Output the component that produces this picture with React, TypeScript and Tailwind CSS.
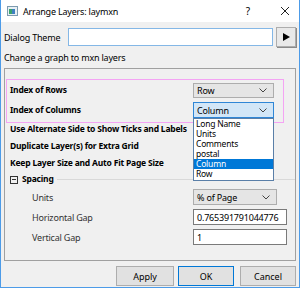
import React from 'react';

const Chevron = () => (
  <svg width="8" height="5" viewBox="0 0 8 5" className="shrink-0">
    <polyline points="0.5,0.5 4,4 7.5,0.5" fill="none" stroke="#444" strokeWidth="1" />
  </svg>
);

interface SelectProps {
  value: string;
  width: string;
  height: string;
  active?: boolean;
}

const Select: React.FC<SelectProps> = ({ value, width, height, active }) => (
  <div
    className={`${width} ${height} flex items-center justify-between pl-[3px] pr-[6px] border ${
      active ? 'border-[#2f86d6] bg-[#d2e6f7]' : 'border-[#adadad] bg-[#e5e5e5]'
    }`}
  >
    <span className="text-[9px] tracking-[-0.2px] leading-none whitespace-nowrap">{value}</span>
    <Chevron />
  </div>
);

const listItems = ['Long Name', 'Units', 'Comments', 'postal', 'Column', 'Row'];

const Label: React.FC<{ children: React.ReactNode; className?: string }> = ({ children, className }) => (
  <span className={`text-[8.5px] font-bold tracking-[-0.2px] leading-none whitespace-nowrap ${className ?? ''}`}>
    {children}
  </span>
);

export default function App() {
  return (
    <div className="w-[300px] h-[288px] bg-[#f0f0f0] border-x border-b border-[#4c9be8] flex flex-col overflow-hidden text-black font-['Noto_Sans',sans-serif]">
      {/* title bar */}
      <div className="h-[22px] bg-white flex items-center shrink-0">
        <svg width="11" height="10" viewBox="0 0 11 10" className="ml-[6px]">
          <rect x="0.5" y="0.5" width="10" height="9" fill="#e8f0f4" stroke="#7d9bb0" />
          <rect x="2" y="3" width="3" height="5" fill="#3aa36a" />
          <rect x="5" y="3" width="3" height="5" fill="#3f7fc0" />
        </svg>
        <span className="ml-[5px] text-[9px] tracking-[-0.2px] leading-none">Arrange Layers: laymxn</span>
        <span className="ml-auto text-[10px] leading-none mr-[30px]">?</span>
        <svg width="10" height="10" viewBox="0 0 10 10" className="mr-[9px]">
          <path d="M1 1 L9 9 M9 1 L1 9" stroke="#222" strokeWidth="1" />
        </svg>
      </div>

      <div className="flex flex-col pl-[3px] pr-[3px]">
        {/* dialog theme */}
        <div className="mt-[5px] h-[20px] flex items-center">
          <span className="w-[64px] text-[9px] tracking-[-0.2px] leading-none">Dialog Theme</span>
          <div className="w-[206px] h-[18px] bg-white border border-[#84b7e6]" />
          <div className="ml-[3px] w-[20px] h-[20px] bg-[#e9e9e9] border border-[#adadad] shadow-[1px_1px_0_#8a8a8a] flex items-center justify-center">
            <svg width="7" height="8" viewBox="0 0 7 8">
              <polygon points="0,0 7,4 0,8" fill="#000" />
            </svg>
          </div>
        </div>

        <div className="mt-[3px] h-[14px] flex items-center">
          <span className="text-[9px] tracking-[-0.2px] leading-none">Change a graph to mxn layers</span>
        </div>

        {/* main panel */}
        <div className="mt-[4px] w-[292px] h-[193px] border border-[#a0a0a0] flex flex-col">
          <div className="mt-[10px] ml-[1px] w-[278px] h-[44px] border border-[#f4a4f4] flex flex-col">
            <div className="h-[20px] flex items-center">
              <Label className="w-[186px] pl-[3px]">Index of Rows</Label>
              <Select value="Row" width="w-[81px]" height="h-[15px]" />
            </div>
            <div className="h-[20px] flex items-center">
              <Label className="w-[186px] pl-[3px]">Index of Columns</Label>
              <div className="relative">
                <Select value="Column" width="w-[81px]" height="h-[16px]" active />
                <div className="absolute top-full left-0 w-[81px] h-[63px] bg-white border border-[#5a7fa8] z-10">
                  <div className="flex flex-col">
                    {listItems.map((item) => (
                      <div
                        key={item}
                        className={`h-[10px] pl-[2px] text-[8.5px] tracking-[-0.2px] leading-[10px] whitespace-nowrap ${
                          item === 'Column' ? 'bg-[#0078d7] text-white' : ''
                        }`}
                      >
                        {item}
                      </div>
                    ))}
                  </div>
                </div>
              </div>
            </div>
          </div>

          <div className="-mt-[2px] flex flex-col">
            <div className="h-[17px] flex items-center pl-[5px]">
              <Label>Use Alternate Side to Show Ticks and Labels</Label>
            </div>
            <div className="h-[17px] flex items-center pl-[5px]">
              <Label>Duplicate Layer(s) for Extra Grid</Label>
            </div>
            <div className="h-[17px] flex items-center pl-[5px]">
              <Label>Keep Layer Size and Auto Fit Page Size</Label>
            </div>
            <div className="h-[15px] flex items-center pl-[5px]">
              <div className="w-[8px] h-[8px] border border-[#333] flex items-center justify-center">
                <div className="w-[4px] h-px bg-[#333]" />
              </div>
              <Label className="ml-[4px]">Spacing</Label>
              <div className="ml-[3px] flex-1 h-px bg-[#d9d9d9]" />
            </div>
            <div className="h-[20px] flex items-center">
              <span className="w-[188px] pl-[27px] text-[9px] tracking-[-0.2px] leading-none text-[#333]">Units</span>
              <Select value="% of Page" width="w-[84px]" height="h-[16px]" />
            </div>
            <div className="h-[20px] flex items-center">
              <span className="w-[188px] pl-[27px] text-[9px] tracking-[-0.2px] leading-none text-[#333]">Horizontal Gap</span>
              <div className="w-[94px] h-[16px] bg-white border border-[#7a7a7a] flex items-center pl-[3px] text-[9px] tracking-[-0.2px] leading-none">
                0.765391791044776
              </div>
            </div>
            <div className="h-[20px] flex items-center">
              <span className="w-[188px] pl-[27px] text-[9px] tracking-[-0.2px] leading-none text-[#333]">Vertical Gap</span>
              <div className="w-[94px] h-[16px] bg-white border border-[#7a7a7a] flex items-center pl-[3px] text-[9px] tracking-[-0.2px] leading-none">
                1
              </div>
            </div>
          </div>
        </div>

        {/* buttons */}
        <div className="mt-[5px] h-[20px] flex justify-end gap-[4px]">
          <button className="w-[58px] h-[20px] bg-[#e1e1e1] border border-[#adadad] text-[9px] leading-none">Apply</button>
          <button className="w-[56px] h-[20px] bg-[#e1e1e1] border border-[#0078d7] text-[9px] leading-none">OK</button>
          <button className="ml-[2px] w-[56px] h-[20px] bg-[#e1e1e1] border border-[#adadad] text-[9px] leading-none">Cancel</button>
        </div>
      </div>
    </div>
  );
}
